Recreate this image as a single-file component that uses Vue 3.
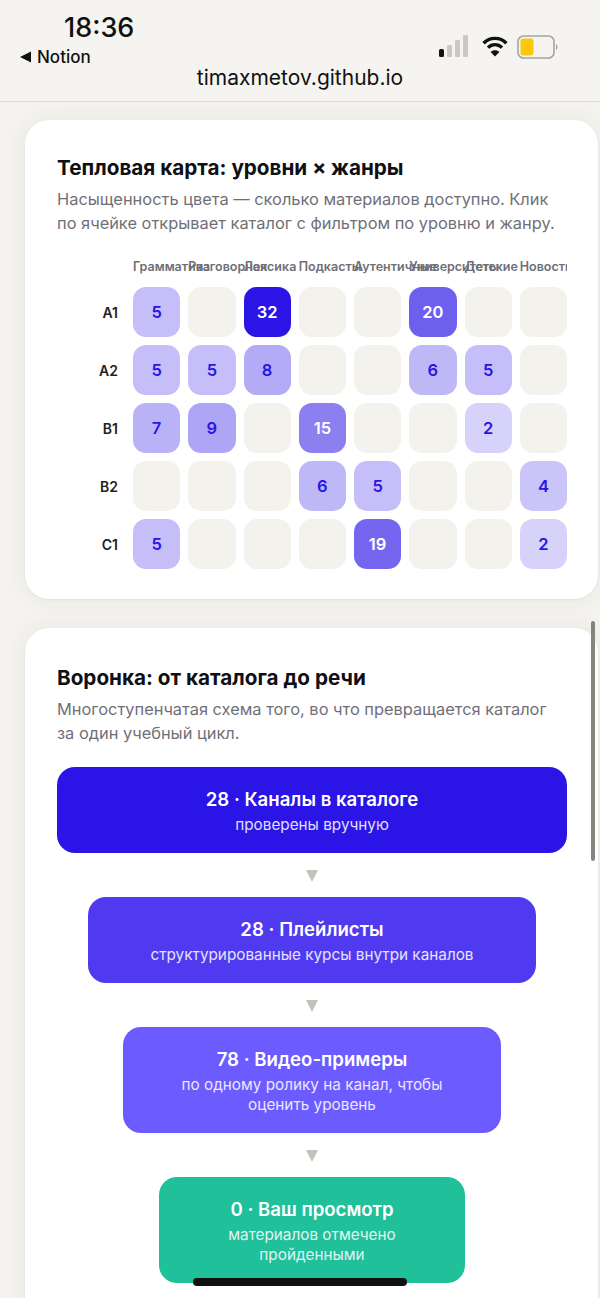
<template>
  <div class="screen">
    <header class="browser-bar">
      <div class="status-row">
        <div class="status-left">
          <div class="time">18:36</div>
          <div class="back">
            <svg width="11" height="12" viewBox="0 0 11 12"><path d="M0 6 L11 0.5 V11.5 Z" fill="#111" /></svg>
            <span>Notion</span>
          </div>
        </div>
        <div class="status-icons">
          <svg class="signal" width="30" height="22" viewBox="0 0 30 22">
            <rect x="0" y="14" width="5" height="8" rx="1.5" fill="#111" />
            <rect x="8" y="10" width="5" height="12" rx="1" fill="#c9c8c4" />
            <rect x="16" y="5" width="5" height="17" rx="1" fill="#c9c8c4" />
            <rect x="24" y="0" width="5" height="22" rx="1" fill="#c9c8c4" />
          </svg>
          <svg width="26" height="22" viewBox="0 0 26 22" fill="none" stroke="#111" stroke-width="3.4">
            <path d="M1.6 8.2 C7.8 1.8 18.2 1.8 24.4 8.2" />
            <path d="M6 12.6 C10 8.6 16 8.6 20 12.6" />
            <path d="M13 21.5 L8.6 17 C11 14.8 15 14.8 17.4 17 Z" fill="#111" stroke="none" />
          </svg>
          <svg width="42" height="24" viewBox="0 0 42 24">
            <rect x="1" y="1" width="36" height="22" rx="5.5" fill="none" stroke="#a5a4a0" stroke-width="1.6" />
            <rect x="3.5" y="3.5" width="13" height="17" rx="3" fill="#fcc80c" />
            <path d="M39 9 C41 10 41 14 39 15 Z" fill="#a5a4a0" />
          </svg>
        </div>
      </div>
      <div class="url">timaxmetov.github.io</div>
    </header>

    <main class="page">
      <section class="card">
        <h2>Тепловая карта: уровни × жанры</h2>
        <p class="lead">Насыщенность цвета — сколько материалов доступно. Клик по ячейке открывает каталог с фильтром по уровню и жанру.</p>
        <div class="heatmap">
          <div></div>
          <div v-for="g in genres" :key="g" class="genre">{{ g }}</div>
          <template v-for="row in rows" :key="row.level">
            <div class="level">{{ row.level }}</div>
            <div
              v-for="(n, i) in row.counts"
              :key="i"
              class="cell"
              :class="{ light: n >= 15 }"
              :style="cellStyle(n)"
            >{{ n || '' }}</div>
          </template>
        </div>
      </section>

      <section class="card second">
        <h2>Воронка: от каталога до речи</h2>
        <p class="lead">Многоступенчатая схема того, во что превращается каталог за один учебный цикл.</p>
        <div class="funnel">
          <template v-for="(s, i) in stages" :key="s.title">
            <div v-if="i > 0" class="arrow"></div>
            <div class="stage" :class="s.cls">
              <div class="stage-title">{{ s.title }}</div>
              <div class="stage-sub">{{ s.sub }}</div>
            </div>
          </template>
        </div>
      </section>
    </main>

    <div class="scrollbar"></div>
    <div class="home-bar"></div>
  </div>
</template>

<script setup>
const genres = ['Грамматика', 'Разговорная', 'Лексика', 'Подкасты', 'Аутентичные', 'Университеты', 'Детские', 'Новости']

const rows = [
  { level: 'A1', counts: [5, 0, 32, 0, 0, 20, 0, 0] },
  { level: 'A2', counts: [5, 5, 8, 0, 0, 6, 5, 0] },
  { level: 'B1', counts: [7, 9, 0, 15, 0, 0, 2, 0] },
  { level: 'B2', counts: [0, 0, 0, 6, 5, 0, 0, 4] },
  { level: 'C1', counts: [5, 0, 0, 0, 19, 0, 0, 2] },
]

const stages = [
  { title: '28 · Каналы в каталоге', sub: 'проверены вручную', cls: 's1' },
  { title: '28 · Плейлисты', sub: 'структурированные курсы внутри каналов', cls: 's2' },
  { title: '78 · Видео-примеры', sub: 'по одному ролику на канал, чтобы оценить уровень', cls: 's3' },
  { title: '0 · Ваш просмотр', sub: 'материалов отмечено пройденными', cls: 's4' },
]

// color strength grows with the number of materials
const cellStyle = (n) => {
  if (!n) return {}
  const alpha = 0.14 + (0.86 * n) / 32
  return { backgroundColor: `rgba(42, 20, 230, ${alpha.toFixed(3)})` }
}
</script>

<style>
html, body {
  margin: 0;
  background: #f4f3ef;
}
</style>

<style scoped>
.screen {
  position: relative;
  width: 600px;
  height: 1298px;
  overflow: hidden;
  background: #f4f3ef;
  font-family: Inter, "Noto Sans", sans-serif;
  color: #111;
}

.browser-bar {
  position: relative;
  z-index: 1;
  height: 102px;
  box-sizing: border-box;
  padding: 14px 41px 0 20px;
  background: #f5f4f0;
  border-bottom: 1px solid #dddcd8;
}

.status-row {
  display: flex;
  justify-content: space-between;
  height: 52px;
}

.time {
  margin-left: 44px;
  font-size: 27px;
  line-height: 28px;
  font-weight: 500;
}

.back {
  display: flex;
  align-items: center;
  gap: 6px;
  margin-top: 1px;
  font-size: 17px;
  line-height: 28px;
  font-weight: 500;
}

.status-icons {
  display: flex;
  align-items: flex-start;
  gap: 9px;
  padding-top: 21px;
}

.signal {
  margin-right: 4px;
}

.url {
  margin: 0 -41px 0 -20px;
  text-align: center;
  font-size: 21px;
  line-height: 24px;
}

.page {
  padding: 18px 2px 0 25px;
}

.card {
  box-sizing: border-box;
  height: 479px;
  padding: 34px 31px 0 32px;
  background: #fff;
  border-radius: 24px;
  box-shadow: 0 0 22px rgba(60, 60, 40, 0.07), 0 1px 2px rgba(40, 40, 30, 0.06);
}

.second {
  height: 700px;
  margin-top: 29px;
  padding-top: 36px;
}

h2 {
  margin: 0;
  font-size: 20.7px;
  line-height: 28px;
  font-weight: 700;
  color: #0f0f14;
}

.lead {
  margin: 5px 0 0;
  font-size: 16.4px;
  line-height: 24px;
  color: #6f6f78;
}

.heatmap {
  display: grid;
  grid-template-columns: 68px repeat(8, minmax(0, 1fr));
  grid-template-rows: 21px;
  grid-auto-rows: 50px;
  gap: 8px;
  margin-top: 23px;
  overflow: hidden;
}

.genre {
  font-size: 12.5px;
  line-height: 18px;
  font-weight: 600;
  color: #6f6f77;
  white-space: nowrap;
}

.level {
  align-self: center;
  padding-right: 7px;
  text-align: right;
  font-size: 14px;
  font-weight: 600;
  color: #222;
}

.cell {
  display: flex;
  align-items: center;
  justify-content: center;
  border-radius: 13px;
  background: #f3f2ed;
  font-size: 16.5px;
  font-weight: 600;
  color: #2a14e6;
}

.cell.light {
  color: #fff;
}

.funnel {
  display: flex;
  flex-direction: column;
  align-items: center;
  margin-top: 22px;
}

.arrow {
  width: 0;
  height: 0;
  margin: 17px 0 15px;
  border-left: 6px solid transparent;
  border-right: 6px solid transparent;
  border-top: 12px solid #c4c3bb;
}

.stage {
  box-sizing: border-box;
  padding: 19px 32px 18px;
  border-radius: 18px;
  text-align: center;
  color: #fff;
}

.stage-title {
  font-size: 18.6px;
  line-height: 26px;
  font-weight: 600;
}

.stage-sub {
  margin-top: 3px;
  font-size: 15.3px;
  line-height: 20px;
  opacity: 0.86;
}

.s1 { width: 100%; background: #2a14e6; }
.s2 { width: 88%; background: #4f3af0; }
.s3 { width: 74%; background: #6c5cff; }
.s4 { width: 60%; background: #20c09b; }

.scrollbar {
  position: absolute;
  left: 591px;
  top: 621px;
  width: 4px;
  height: 240px;
  border-radius: 2px;
  background: #85847f;
}

.home-bar {
  position: absolute;
  left: 193px;
  top: 1278px;
  width: 214px;
  height: 8px;
  border-radius: 4px;
  background: #111;
}
</style>
